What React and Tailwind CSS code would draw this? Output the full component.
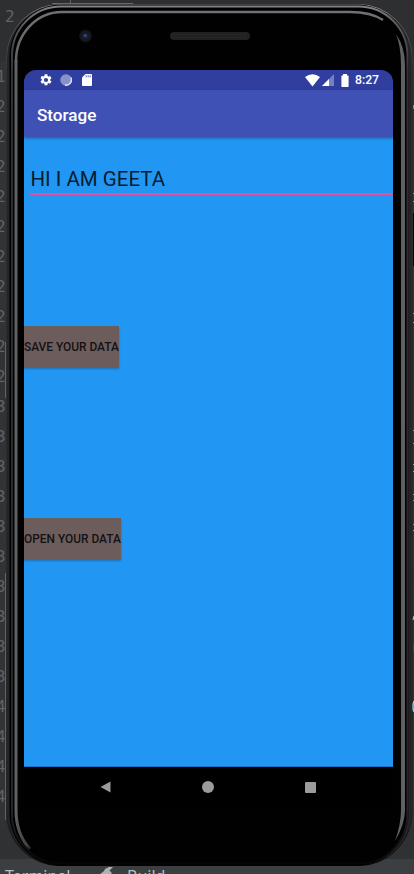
import React from "react";

const lineNumbers = ["1", ...Array(10).fill("2"), ...Array(10).fill("3"), ...Array(4).fill("4")];

function Editor() {
  return (
    <div className="absolute inset-0 flex flex-col bg-[#313335] font-['DejaVu_Sans_Mono','Liberation_Mono',monospace] text-[16px] text-[#606366]">
      <div className="h-[61px] bg-[#2e2f31] pl-[5px] pt-[2px] leading-[30px]">2</div>
      <div className="-ml-[4px] flex h-[760px] flex-col pt-px">
        {lineNumbers.map((n, i) => (
          <span key={i} className="h-[30px] leading-[30px]">{n}</span>
        ))}
        <span className="ml-[5px] mt-[10px] h-px w-[3px] bg-[#606366]" />
      </div>
      <div className="h-[38px] bg-[#303133]" />
      <div className="flex flex-1 overflow-hidden bg-[#3c3f41] pl-[5px] font-['Noto_Sans',sans-serif] text-[16px] leading-[20px] text-[#bbbbbb]">
        <span className="mt-[7px] w-[94px]">Terminal</span>
        <svg className="mt-[7px] h-[14px] w-[16px]" viewBox="0 0 16 14" fill="#afb1b3">
          <path d="M6 3L10 1H14L10.5 4.5L13 7L10 10L8 8L2 14H0V9L5 5Z" />
        </svg>
        <span className="ml-[12px] mt-[7px]">Build</span>
      </div>
      <i className="absolute left-[5px] top-[342px] h-[56px] w-px bg-[#606366]" />
      <i className="absolute left-[5px] top-[573px] h-[247px] w-px bg-[#606366]" />
      <i className="absolute left-[70px] top-0 h-[4px] w-px bg-[#606366]" />
    </div>
  );
}

function PhoneShell() {
  return (
    <svg className="absolute inset-0" width="414" height="874" viewBox="0 0 414 874" fill="none">
      <defs>
        <linearGradient id="rim" gradientUnits="userSpaceOnUse" x1="0" y1="10" x2="0" y2="866">
          <stop offset="0" stopColor="#727074" />
          <stop offset=".08" stopColor="#606163" />
          <stop offset=".94" stopColor="#606163" />
          <stop offset=".975" stopColor="#454546" />
          <stop offset=".985" stopColor="#010101" />
        </linearGradient>
        <linearGradient id="outer" gradientUnits="userSpaceOnUse" x1="0" y1="5" x2="0" y2="866">
          <stop offset="0" stopColor="#858488" />
          <stop offset=".025" stopColor="#59595b" />
          <stop offset=".08" stopColor="#303133" />
          <stop offset=".93" stopColor="#252627" />
          <stop offset="1" stopColor="#050404" />
        </linearGradient>
      </defs>
      <rect x="6" y="4" width="406.5" height="862" rx="54" fill="#242526" />
      <rect x="6.5" y="4.5" width="405.5" height="861" rx="53.5" stroke="url(#outer)" />
      <rect x="9.5" y="4.5" width="399" height="861" rx="52" fill="#010101" />
      <rect x="12" y="6.5" width="395.5" height="857" rx="49" stroke="url(#outer)" strokeWidth="2" />
      <path d="M16 60V810Q16 834 30 849" stroke="url(#rim)" strokeWidth="3" />
      <path d="M16 61A46 49 0 0 1 62 12H350Q371 12 383 20" stroke="url(#rim)" strokeWidth="2.5" />
      <path d="M396 34Q405 47 405 65V810Q405 824 395 841Q401 824 401 810V65Q401 47 396 34Z" fill="#5f6062" />
      <path d="M52 3.5H133" stroke="#68686b" />
      <path d="M413.5 213V266" stroke="#050505" />
      <circle cx="85.5" cy="36" r="6.2" fill="#151619" />
      <circle cx="85.5" cy="36" r="3.5" fill="#172039" />
      <circle cx="85.2" cy="35.5" r="1.5" fill="#384878" />
      <rect x="170" y="32" width="80" height="8" rx="4" fill="#202221" />
      <path d="M172 34.5H248M172 37.5H248" stroke="#2a2c2b" strokeDasharray="1 1" />
    </svg>
  );
}

function StatusBar() {
  return (
    <div className="flex h-[20px] items-center bg-[#303f9f] text-white">
      <svg className="ml-[15px] h-[14px] w-[14px]" viewBox="0 0 24 24" fill="currentColor">
        <path d="M19.14 12.94c.04-.3.06-.61.06-.94s-.02-.64-.07-.94l2.03-1.58a.49.49 0 0 0 .12-.61l-1.92-3.32a.49.49 0 0 0-.59-.22l-2.39.96c-.5-.38-1.03-.7-1.62-.94l-.36-2.54A.48.48 0 0 0 13.92 2h-3.84a.48.48 0 0 0-.47.41l-.36 2.54c-.59.24-1.13.57-1.62.94l-2.39-.96a.48.48 0 0 0-.59.22L2.74 8.47a.47.47 0 0 0 .12.61l2.03 1.58c-.05.3-.09.63-.09.94s.02.64.07.94l-2.03 1.58a.49.49 0 0 0-.12.61l1.92 3.32c.12.22.37.29.59.22l2.39-.96c.5.38 1.03.7 1.62.94l.36 2.54c.05.24.24.41.48.41h3.84c.24 0 .44-.17.47-.41l.36-2.54c.59-.24 1.13-.56 1.62-.94l2.39.96c.22.08.47 0 .59-.22l1.92-3.32a.47.47 0 0 0-.12-.61zM12 15.6A3.6 3.6 0 1 1 12 8.4a3.6 3.6 0 0 1 0 7.2z" />
      </svg>
      <svg className="ml-[7px] h-[12px] w-[12px]" viewBox="0 0 12 12">
        <circle cx="6" cy="6" r="5.8" fill="#8991ca" />
        <path d="M10.8 3.5A5.2 5.2 0 0 1 5 11" fill="none" stroke="#dfe1f1" strokeWidth="1.4" />
      </svg>
      <svg className="ml-[10px] h-[12px] w-[10px]" viewBox="0 0 10 12">
        <path d="M3.5 0H9Q10 0 10 1V11Q10 12 9 12H1Q0 12 0 11V3.5Z" fill="white" />
        <path d="M4.2 1.3V3.3M6.2 1.3V3.3M8.2 1.3V3.3" stroke="#303f9f" strokeWidth=".8" />
      </svg>
      <svg className="ml-[213px] h-[13px] w-[15px]" viewBox="0 0 15 13">
        <path d="M0 3Q7.5-2.5 15 3L7.5 12.5Z" fill="white" />
      </svg>
      <svg className="ml-[2px] h-[12px] w-[12px]" viewBox="0 0 12 12">
        <path d="M12 0V12H0Z" fill="#7780be" />
        <path d="M7 5V12H0Z" fill="white" />
      </svg>
      <svg className="ml-[7px] h-[13px] w-[8px]" viewBox="0 0 8 13">
        <path d="M2 0H6V1.5H7Q7.6 1.5 7.6 2.2V12.3Q7.6 13 7 13H1Q.4 13 .4 12.3V2.2Q.4 1.5 1 1.5H2Z" fill="white" />
      </svg>
      <span className="ml-[6px] text-[12.2px] font-medium leading-[20px]">8:27</span>
    </div>
  );
}

function DataButton({ children, className }) {
  return (
    <button className={`block h-[41px] whitespace-nowrap bg-[#6d5c5c] text-left text-[11.9px] font-medium leading-[42px] text-[#141212] shadow-[0_2px_2px_rgba(0,0,0,0.25)] ${className}`}>
      {children}
    </button>
  );
}

export default function App() {
  return (
    <main className="relative h-[874px] w-[414px] overflow-hidden bg-[#313335]">
      <Editor />
      <PhoneShell />
      <section className="relative ml-[24px] flex w-[369px] flex-col pt-[70px] font-[Roboto,sans-serif]">
        <div className="flex h-[738px] flex-col overflow-hidden rounded-[12px] bg-black">
          <StatusBar />
          <header className="z-10 h-[47px] bg-[#3f51b5] pl-[13px] text-[17.1px] font-medium leading-[50px] text-white shadow-[0_1px_3px_rgba(0,0,0,0.4)]">
            Storage
          </header>
          <div className="flex h-[630px] flex-col items-start border-b border-[#1976c8] bg-[#2196f3]">
            <div className="ml-[6px] h-[58px] w-[363px] border-b-2 border-[#e3519b] pl-[0.5px] pt-[28px] text-[20.5px] leading-[28px] text-[#061c30]">
              HI I AM GEETA
            </div>
            <DataButton className="mt-[131px] w-[95px]">SAVE YOUR DATA</DataButton>
            <DataButton className="mt-[151px] w-[97px]">OPEN YOUR DATA</DataButton>
          </div>
          <nav className="flex h-[40px] items-center pl-[76px]">
            <svg className="h-[12px] w-[11px]" viewBox="0 0 11 12"><path d="M10.5.5V11.5L.5 6Z" fill="#9b9b9b" /></svg>
            <span className="ml-[91px] h-[12px] w-[12px] rounded-full bg-[#9b9b9b]" />
            <span className="ml-[91px] h-[11px] w-[11px] rounded-[1px] bg-[#9b9b9b]" />
          </nav>
        </div>
      </section>
      <svg className="absolute right-0 top-0" width="3" height="874" viewBox="0 0 3 874" fill="none">
        <path d="M2 193.5H3M2 201.5H3M2 313.5H3M2 322.5H3M2 430.5H3M2 443.5H3M2 464.5H3M2 471.5H3M2 494.5H3M2 500.5H3M2 524.5H3M2 530.5H3" stroke="#a3988d" />
        <path d="M2.5 105V109" stroke="#c07842" />
        <path d="M2 620L3 616" stroke="#b7d6ef" />
        <path d="M2.5 644V652" stroke="#772b31" />
        <path d="M3 701Q1 707 3 712" stroke="#83c7ef" strokeWidth="1.5" />
      </svg>
    </main>
  );
}
